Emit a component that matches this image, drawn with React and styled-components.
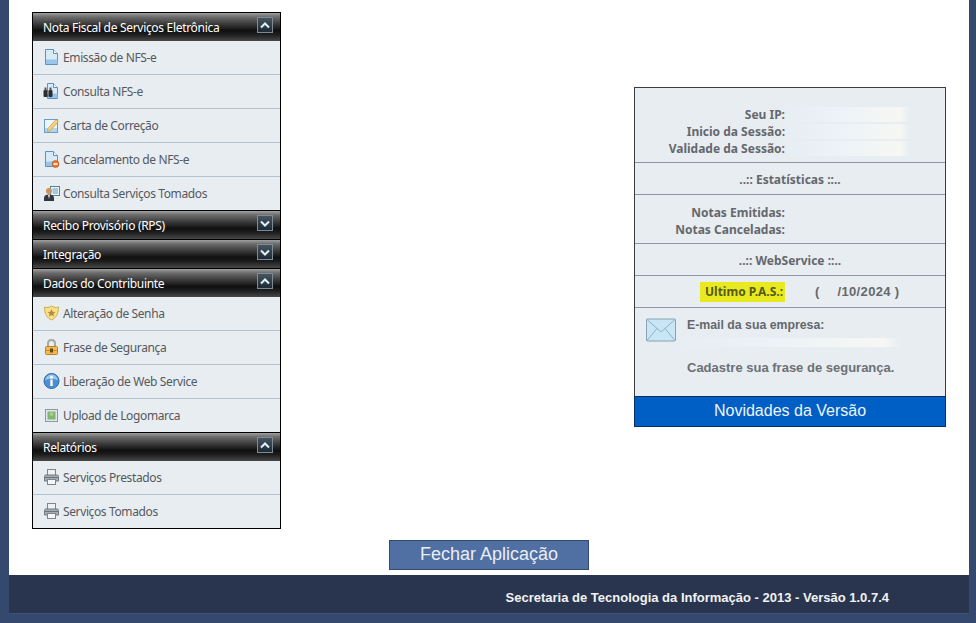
import React from 'react';
import styled, { createGlobalStyle } from 'styled-components';

const GlobalStyle = createGlobalStyle`
  html, body { margin: 0; padding: 0; }
  body { background: #35496e; font-family: "Liberation Sans", Arial, sans-serif; }
`;

const Shell = styled.div`
  margin: 0 7px 0 9px;
  height: 613px;
  display: flex;
  flex-direction: column;
  background: #fff;
  border-bottom: 1px solid #3d5275;
  box-sizing: content-box;
`;

const Content = styled.div`
  flex: 1;
  display: flex;
  flex-direction: column;
`;

const Columns = styled.div`
  display: flex;
  justify-content: space-between;
  align-items: flex-start;
  padding: 12px 23px 0;
`;

const Menu = styled.div`
  width: 247px;
  border: 1px solid #000;
  background: #e8edf2;
`;

const Header = styled.div`
  height: ${({ $sep }) => ($sep ? '29px' : '28px')};
  box-sizing: border-box;
  display: flex;
  align-items: center;
  justify-content: space-between;
  padding: 1px 7px 0 10px;
  background: linear-gradient(#a0a0a0 0, #6c6c6c 14%, #3c3c3c 38%, #101010 62%, #1c1c1c 76%, #484848 100%);
  border-top: ${({ $sep }) => ($sep ? '1px solid #000' : 'none')};
  color: #fff;
  font-family: "Noto Sans", sans-serif;
  font-size: 12px;
  letter-spacing: -0.31px;
`;

const Toggle = styled.span`
  width: 16px;
  height: 16px;
  margin-top: -5px;
  box-sizing: border-box;
  border: 1px solid #7e8a94;
  background: linear-gradient(#46545f, #1d2a35);
  display: flex;
  align-items: center;
  justify-content: center;
`;

const Item = styled.div`
  height: ${({ $first }) => ($first ? '33px' : '34px')};
  box-sizing: border-box;
  display: flex;
  align-items: center;
  gap: 3px;
  padding: 0 0 1px 10px;
  border-top: ${({ $first }) => ($first ? 'none' : '1px solid #b3c3d2')};
  color: #55595d;
  font-family: "Noto Sans", sans-serif;
  font-size: 12px;
  letter-spacing: -0.38px;
`;

const IconBox = styled.span`
  width: 17px;
  height: 18px;
  display: flex;
  align-items: center;
  justify-content: center;
`;

const Stats = styled.div`
  width: 310px;
  margin-top: 75px;
  border: 1px solid #3c3c3c;
  background: #e8edf2;
  color: #64686c;
  font-family: "Noto Sans", sans-serif;
  font-size: 12px;
  font-weight: 700;
`;

const Section = styled.div`
  height: ${({ $h }) => $h}px;
  box-sizing: border-box;
  border-bottom: 1px solid #8e979e;
  display: flex;
  flex-direction: column;
  justify-content: flex-end;
  padding-bottom: 5px;
`;

const Row = styled.div`
  display: grid;
  grid-template-columns: 150px 124px;
  height: 17px;
  line-height: 17px;
  column-gap: 1px;
  text-align: right;
`;

const Smudge = styled.span`
  display: block;
  height: ${({ $h }) => $h ?? 15}px;
  margin-top: 1px;
  background: linear-gradient(90deg, rgba(226,240,250,.2) 0, rgba(240,246,250,.6) 45%, rgba(250,250,244,.8) 92%, rgba(255,255,255,0) 100%);
`;

const Title = styled.div`
  height: 31px;
  line-height: 34px;
  text-align: center;
  border-bottom: 1px solid #8e979e;
`;

const PasRow = styled.div`
  height: 32px;
  box-sizing: border-box;
  border-bottom: 1px solid #8e979e;
  padding: 6px 0 0 65px;
  display: flex;
  align-items: flex-start;
`;

const Highlight = styled.span`
  width: 85px;
  height: 20px;
  line-height: 20px;
  box-sizing: border-box;
  padding-left: 5px;
  background: #e9e91f;
  color: #55591a;
  white-space: nowrap;
`;

const PasDate = styled.span`
  margin-left: 30px;
  line-height: 20px;
  font-family: "Liberation Sans", sans-serif;
  font-size: 13px;
  letter-spacing: 0.35px;
  white-space: pre;
`;

const PasSlash = styled.span`
  margin-left: -2px;
`;

const MailBlock = styled.div`
  height: 88px;
  box-sizing: border-box;
  display: flex;
  gap: 11px;
  padding: 10px 0 0 11px;
`;

const MailText = styled.div`
  font-family: "Liberation Sans", sans-serif;
  font-size: 12.3px;
`;

const MailSmudge = styled(Smudge)`
  width: 220px;
  height: 9px;
  margin: 6px 0 0 -6px;
`;

const Cadastre = styled.div`
  margin-top: 13px;
  font-size: 13px;
  color: #6c7074;
  white-space: nowrap;
`;

const News = styled.div`
  height: 31px;
  line-height: 28px;
  box-sizing: border-box;
  border: 1px solid #0b2f63;
  margin: 0 -1px -1px;
  background: #005fc4;
  color: #eef4fb;
  text-align: center;
  font-family: "Liberation Sans", sans-serif;
  font-size: 16px;
  font-weight: 400;
`;

const CloseButton = styled.button`
  display: block;
  width: 200px;
  height: 30px;
  margin: 11px auto 0;
  padding: 0 0 1px;
  border: 1px solid #34496e;
  background: #506fa2;
  color: #e9edf4;
  font-family: "Liberation Sans", sans-serif;
  font-size: 18px;
`;

const Footer = styled.div`
  height: 38px;
  box-sizing: border-box;
  padding-right: 80px;
  background: #29354f;
  color: #f2f2f2;
  font-size: 13px;
  font-weight: 700;
  line-height: 45px;
  text-align: right;
`;

const Chevron = ({ up }) => (
  <svg width="10" height="7" viewBox="0 0 10 7">
    <path d={up ? 'M1 5.5 L5 1.5 L9 5.5' : 'M1 1.5 L5 5.5 L9 1.5'} fill="none" stroke="#dff2f8" strokeWidth="2" />
  </svg>
);

const PageBase = ({ children, x = 2.5 }) => (
  <svg width="17" height="18" viewBox="0 0 17 18">
    <path d={`M${x} 1.5H10.5L14.5 5.5V16.5H${x}Z`} fill="#d9eaf7" stroke="#5b93c3" />
    <path d="M10.5 1.5V5.5H14.5" fill="#f4fafe" stroke="#5b93c3" />
    <rect x={x + 0.5} y="11.5" width={14 - x} height="4.5" fill="#97c6ea" />
    {children}
  </svg>
);

const icons = {
  doc: <PageBase />,
  search: (
    <PageBase x={4.5}>
      <rect x="0.5" y="8" width="4" height="7" rx="1" fill="#2c2c30" />
      <rect x="5.5" y="8" width="4" height="7" rx="1" fill="#2c2c30" />
      <rect x="4" y="9.500" width="2" height="2.500" fill="#77777c" />
      <rect x="1.500" y="5.500" width="2" height="3" fill="#55555a" />
      <rect x="6.500" y="5.500" width="2" height="3" fill="#55555a" />
    </PageBase>
  ),
  edit: (
    <svg width="17" height="18" viewBox="0 0 17 18">
      <rect x="1.500" y="3.500" width="13" height="13" fill="#eef5fb" stroke="#6a9dc6" />
      <rect x="2" y="12" width="12" height="4" fill="#b5d4ec" />
      <path d="M5 12.500L13 3.500L15.500 5.500L7.500 14.500L4.500 15.500Z" fill="#f2d27c" stroke="#c09a44" strokeWidth=".7" />
    </svg>
  ),
  cancel: (
    <PageBase>
      <circle cx="12.500" cy="14" r="3.500" fill="#e8762c" stroke="#b85214" strokeWidth=".6" />
      <rect x="10.500" y="13.200" width="4" height="1.600" fill="#fff" />
    </PageBase>
  ),
  person: (
    <svg width="17" height="18" viewBox="0 0 17 18">
      <rect x="7.500" y="2.500" width="9" height="9" fill="#eef6fb" stroke="#4d8a7a" />
      <path d="M9.500 5H15M9.500 7H15M9.500 9H15" stroke="#5d9ac6" />
      <circle cx="6" cy="7" r="3" fill="#c9925f" />
      <path d="M1 17V14C1 11.500 3 10.500 6 10.500S11 11.500 11 14V17Z" fill="#33363a" />
      <path d="M5 11H7L6 15Z" fill="#e8e8e8" />
    </svg>
  ),
  shield: (
    <svg width="17" height="18" viewBox="0 0 17 18">
      <path d="M1.500 3C4 4 6 3.500 8.500 2C11 3.500 13 4 15.500 3C15.500 10 13 14 8.500 16C4 14 1.500 10 1.500 3Z" fill="#f8e08a" stroke="#d0ad4e" />
      <path d="M8.500 5L9.700 7.700L12.500 8L10.400 9.800L11 12.500L8.500 11L6 12.500L6.600 9.800L4.500 8L7.300 7.700Z" fill="#b98a3c" />
    </svg>
  ),
  lock: (
    <svg width="17" height="18" viewBox="0 0 17 18">
      <path d="M5 9V5.500C5 3.500 6.500 2 8.500 2S12 3.500 12 5.500V9" fill="none" stroke="#a8a89e" strokeWidth="2" />
      <rect x="2.500" y="8.500" width="12" height="8" rx="1" fill="#f0bb55" stroke="#b8842a" />
      <path d="M3 12.500H14" stroke="#c98f2c" />
      <rect x="7" y="10.500" width="3" height="4" fill="#6b4612" />
    </svg>
  ),
  info: (
    <svg width="17" height="18" viewBox="0 0 17 18">
      <circle cx="8.500" cy="9" r="7.500" fill="#4a90d0" stroke="#2a6aa8" />
      <path d="M2 8C3 4 6 2.500 8.500 2.500S14 4 15 8C12 6.500 5 6.500 2 8Z" fill="#9cc8ec" />
      <circle cx="8.500" cy="5.200" r="1.400" fill="#fff" />
      <rect x="7.300" y="7.500" width="2.400" height="6.500" fill="#fff" />
    </svg>
  ),
  upload: (
    <svg width="17" height="18" viewBox="0 0 17 18">
      <rect x="2.500" y="3.500" width="12" height="12" fill="#dfe7ea" stroke="#8b9aa3" />
      <rect x="4.500" y="5.500" width="8" height="8" fill="#7fb573" />
      <circle cx="8.500" cy="8" r="2" fill="#a6cf8f" />
    </svg>
  ),
  print: (
    <svg width="17" height="18" viewBox="0 0 17 18">
      <rect x="4.500" y="1.500" width="8" height="6" fill="#eef1f3" stroke="#7c868c" />
      <path d="M1.500 13V8.500C1.500 7.500 2 7 3 7H14C15 7 15.500 7.500 15.500 8.500V13Z" fill="#a6aeb4" stroke="#737b81" />
      <rect x="4.500" y="11.500" width="8" height="5" fill="#f4f6f7" stroke="#7c868c" />
      <path d="M2 9.500H15" stroke="#6b7379" />
    </svg>
  ),
};

const groups = [
  {
    title: 'Nota Fiscal de Serviços Eletrônica',
    items: [
      ['doc', 'Emissão de NFS-e'],
      ['search', 'Consulta NFS-e'],
      ['edit', 'Carta de Correção'],
      ['cancel', 'Cancelamento de NFS-e'],
      ['person', 'Consulta Serviços Tomados'],
    ],
  },
  { title: 'Recibo Provisório (RPS)' },
  { title: 'Integração' },
  {
    title: 'Dados do Contribuinte',
    items: [
      ['shield', 'Alteração de Senha'],
      ['lock', 'Frase de Segurança'],
      ['info', 'Liberação de Web Service'],
      ['upload', 'Upload de Logomarca'],
    ],
  },
  {
    title: 'Relatórios',
    items: [
      ['print', 'Serviços Prestados'],
      ['print', 'Serviços Tomados'],
    ],
  },
];

const App = () => (
  <>
    <GlobalStyle />
    <Shell>
      <Content>
        <Columns>
          <Menu>
            {groups.map((group, g) => (
              <div key={group.title}>
                <Header $sep={g > 0}>
                  {group.title}
                  <Toggle><Chevron up={!!group.items} /></Toggle>
                </Header>
                {(group.items || []).map(([icon, label], i) => (
                  <Item key={label} $first={i === 0}>
                    <IconBox>{icons[icon]}</IconBox>
                    {label}
                  </Item>
                ))}
              </div>
            ))}
          </Menu>
          <Stats>
            <Section $h={75}>
              <Row>Seu IP:<Smudge /></Row>
              <Row>Inicio da Sessão:<Smudge /></Row>
              <Row>Validade da Sessão:<Smudge /></Row>
            </Section>
            <Title>..:: Estatísticas ::..</Title>
            <Section $h={49}>
              <Row>Notas Emitidas:<span /></Row>
              <Row>Notas Canceladas:<span /></Row>
            </Section>
            <Title>..:: WebService ::..</Title>
            <PasRow>
              <Highlight>Ultimo P.A.S.:</Highlight>
              <PasDate>(     <PasSlash>/10/2024 )</PasSlash></PasDate>
            </PasRow>
            <MailBlock>
              <svg width="30" height="24" viewBox="0 0 30 24">
                <rect x="0.500" y="1" width="29" height="22" rx="1" fill="#c9e6f7" stroke="#8aa2b2" />
                <path d="M1 1.500L15 14L29 1.500M1 22.500L11 10.500M29 22.500L19 10.500" fill="none" stroke="#8fb0c4" />
              </svg>
              <MailText>
                E-mail da sua empresa:
                <MailSmudge />
                <Cadastre>Cadastre sua frase de segurança.</Cadastre>
              </MailText>
            </MailBlock>
            <News>Novidades da Versão</News>
          </Stats>
        </Columns>
        <CloseButton>Fechar Aplicação</CloseButton>
      </Content>
      <Footer>Secretaria de Tecnologia da Informação - 2013 - Versão 1.0.7.4</Footer>
    </Shell>
  </>
);

export default App;
